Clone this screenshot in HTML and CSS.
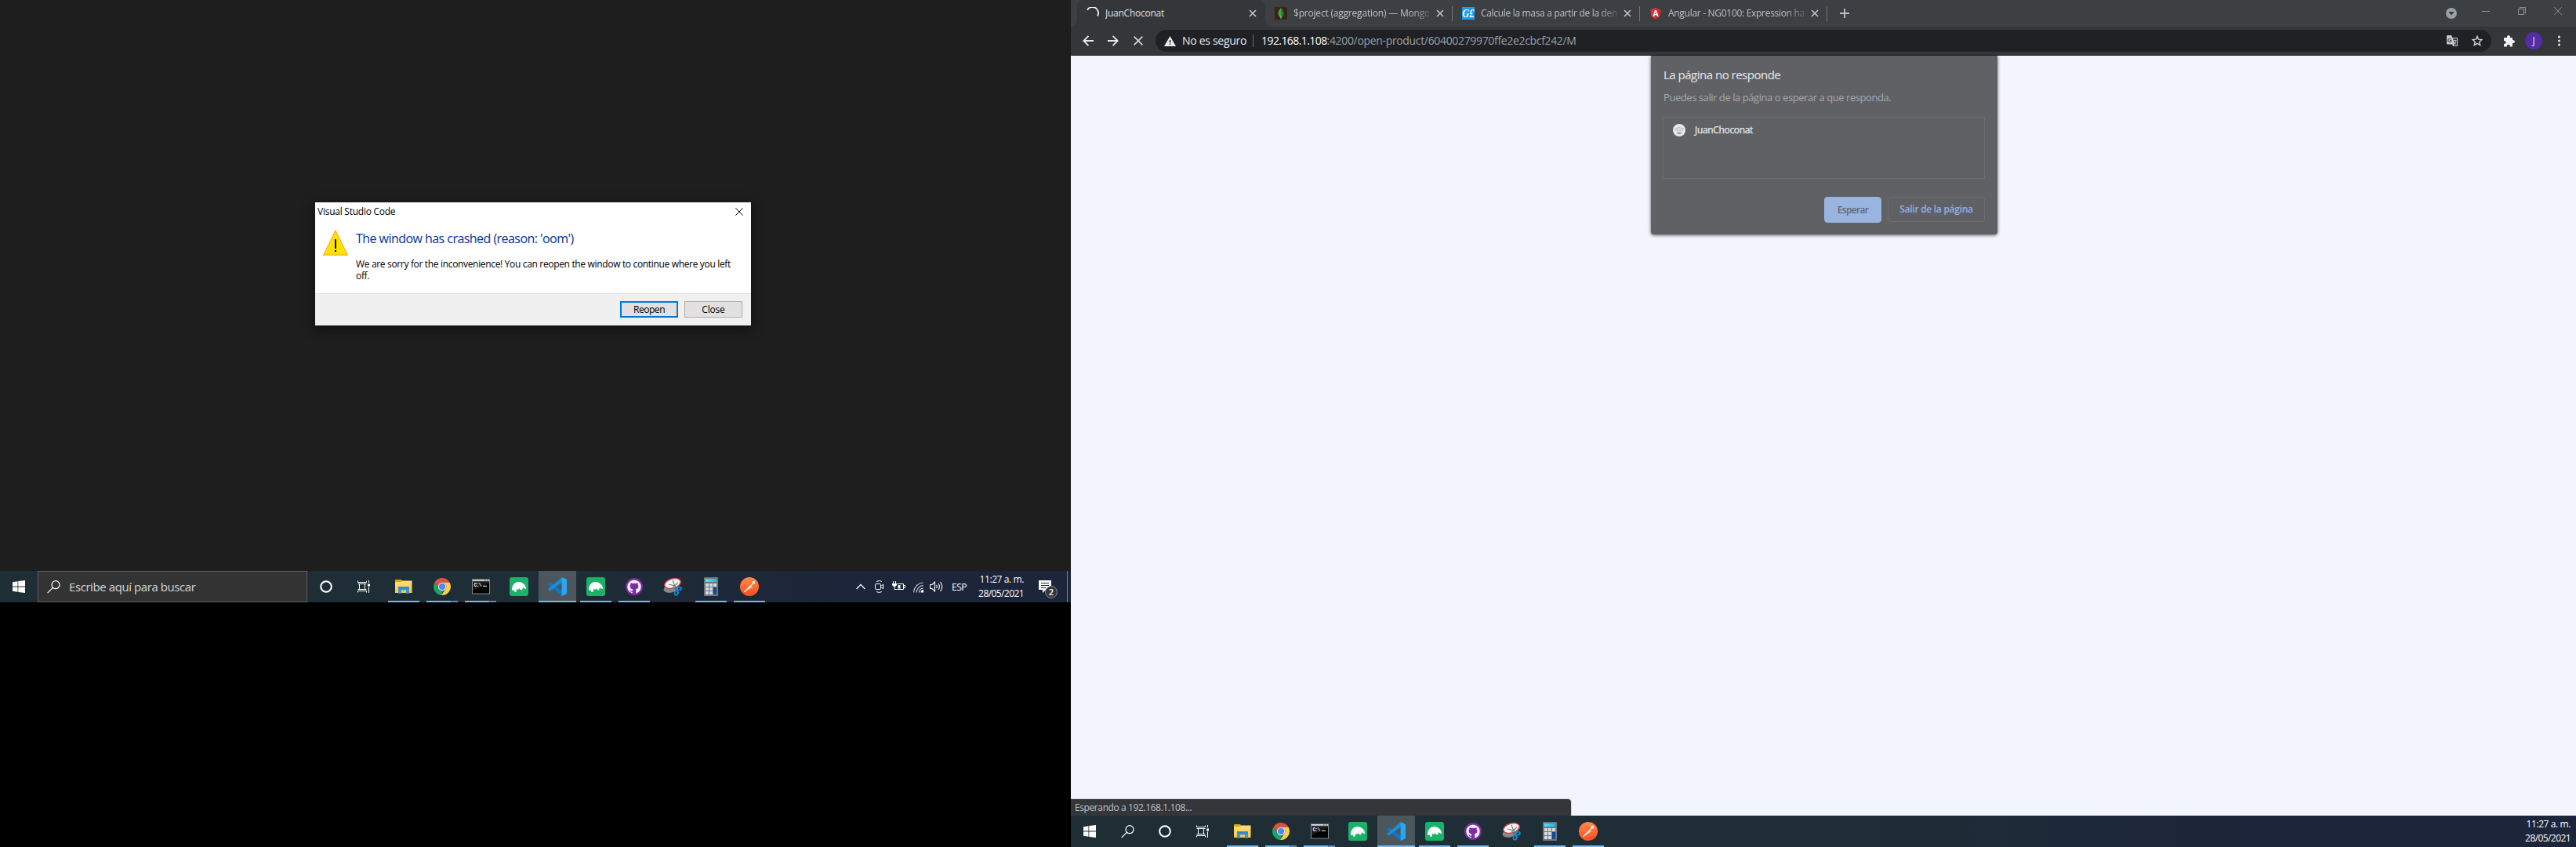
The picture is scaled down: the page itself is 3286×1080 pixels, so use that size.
FILE: index.html
```html
<!DOCTYPE html>
<html lang="es">
<head>
<meta charset="utf-8">
<title>JuanChoconat</title>
<link rel="stylesheet" href="styles.css">
</head>
<body>
<svg class="defs" width="0" height="0" aria-hidden="true">
  <defs>
    <linearGradient id="gPost" x1="0" y1="0" x2="0" y2="1"><stop offset="0" stop-color="#ff8a45"/><stop offset="1" stop-color="#ff4f25"/></linearGradient>
    <linearGradient id="gFold" x1="0" y1="0" x2="0" y2="1"><stop offset="0" stop-color="#ffe07a"/><stop offset="1" stop-color="#f9c63f"/></linearGradient>
    <linearGradient id="gCalc" x1="0" y1="0" x2="1" y2="0"><stop offset="0" stop-color="#55e3fb"/><stop offset="1" stop-color="#22b4e6"/></linearGradient>
  </defs>
  <symbol id="i-win" viewBox="0 0 16 16"><path fill="#fff" d="M0 2.2 6.5 1.2V7.6H0zM7.3 1.1 16 0V7.6H7.3zM0 8.4H6.5V14.8L0 13.8zM7.3 8.4H16V16L7.3 14.9z"/></symbol>
  <symbol id="i-search" viewBox="0 0 17 17"><g fill="none" stroke="#fff" stroke-width="1.2"><circle cx="11" cy="5.7" r="5"/><path d="M7.4 9.4.6 16.2"/></g></symbol>
  <symbol id="i-cortana" viewBox="0 0 16 16"><circle cx="8" cy="8" r="6.8" fill="none" stroke="#fff" stroke-width="2"/></symbol>
  <symbol id="i-task" viewBox="0 0 17 16"><g fill="none" stroke="#fff" stroke-width="1"><path d="M.5.5v2h11v-2M2.500 4.500v7h7v-7zM.5 15.500v-2h11v2M.5 4.500h11M.5 11.500h11M14.500 0v3M14.500 8.500V16"/></g><path fill="#fff" d="M13 4.500h3v3h-3z"/></symbol>
  <symbol id="i-folder" viewBox="0 0 24 24"><path fill="#e3a200" d="M1 3h8l1.500 2v3H1z"/><path fill="url(#gFold)" d="M1 6h8l1.200-1.500H22.500V20H1z"/><path fill="#3a94dc" d="M5 20.700v-8.200q0-.5.500-.5h13q.5 0 .5.500v8.200h-4V16.500H9v4.200z"/><path fill="#2577c2" d="M5 15v-2.500h14V15z" opacity=".45"/></symbol>
  <symbol id="i-chrome" viewBox="0 0 24 24"><path fill="#dd5144" d="M12 1A11 11 0 0 1 21.600 6.800H12A5.200 5.200 0 0 0 7.400 14.500L2.500 6.500A11 11 0 0 1 12 1z"/><path fill="#1da462" d="M2.500 6.500 7.500 14.600A5.200 5.200 0 0 0 13.500 17L11 23A11 11 0 0 1 2.500 6.500z"/><path fill="#ffcd46" d="M21.600 6.800A11 11 0 0 1 11 23L16.600 14.600A5.200 5.200 0 0 0 12 6.800z"/><circle cx="12" cy="12" r="5.200" fill="#f1f1f1"/><circle cx="12" cy="12" r="4.200" fill="#4c8bf5"/></symbol>
  <symbol id="i-cmd" viewBox="0 0 24 24"><path fill="#868a8c" d="M1 2.500h23v19H1z"/><path fill="#dfe3e4" d="M2 3h15v1.600H2zM18.500 3h1.500v1.600h-1.500zM21.500 3H23v1.600h-1.500z"/><path fill="#000" d="M2 5.500h21v15H2z"/><path fill="#333" d="M2 5.500h21v2L2 17z" opacity=".5"/><text x="3.500" y="11.500" font-family="Liberation Mono,monospace" font-size="6.500" font-weight="700" textLength="10" fill="#fff">C:\</text><path fill="#fff" d="M15 10.800h5v1h-5z"/></symbol>
  <symbol id="i-robo" viewBox="0 0 24 24"><rect width="24" height="24" rx="3" fill="#1bb168"/><path fill="#fff" d="M3 16C2.800 13 4.200 9.500 6.800 7.600 9.500 5.700 13.500 5.600 16 7.200c3 1.200 5 4 5 7.600-1.600.6-2.600-.8-3.600-1.800-1 .8-.8 2-1.200 3.200h-2.400l-1-2.600-.8 2-1.800.1-.5-1.700c-.9 1.600-.6 3.200-1.200 4.800H6.300L6 16.600C5 17.300 3.600 17 3 16z"/></symbol>
  <symbol id="i-code" viewBox="0 0 24 24"><path fill="#0c78c4" d="M0 9 2.500 6.800 18 17.600V24z"/><path fill="#1a8cd8" d="M0 15.200 2.500 17.400 18 6.400V0z"/><path fill="#2aa5f2" d="M17.600 0 24 3V21L17.600 24z"/></symbol>
  <symbol id="i-git" viewBox="0 0 24 24"><circle cx="12" cy="12" r="11" fill="#7d2da8"/><circle cx="12" cy="12.200" r="8.700" fill="#f4f0f6"/><path fill="#7d2da8" d="M7.600 7.200c1 .1 1.700.4 2.300.8q2.100-.5 4.200 0c.6-.4 1.300-.7 2.300-.8.4.9.300 1.500.1 2 .6.600.9 1.300.9 2.200 0 2.500-1.500 3.500-3.600 3.800.4.400.5.900.5 1.600v4.300H9.700v-2.300c-1.700.3-2.300-.5-2.700-1.300l-.9-1c1.100-.2 1.500.4 2 1 .4.500 1 .5 1.600.3.100-.9.200-1.200.5-2.600-2.100-.3-3.600-1.300-3.600-3.800 0-.9.300-1.600.9-2.200-.2-.5-.3-1.100.1-2z"/></symbol>
  <symbol id="i-snip" viewBox="0 0 24 24"><ellipse cx="10" cy="14.500" rx="9.500" ry="5" fill="#85898d" transform="rotate(-10 10 14.500)"/><ellipse cx="12" cy="8" rx="10.500" ry="6" fill="#f6f6f6" stroke="#d8443f" stroke-width="1.500" transform="rotate(-16 12 8)"/><path d="m12 4 4.500 11M19 7l-7 6M7 9l8 2" stroke="#70777c" stroke-width="1.100" fill="none"/><g fill="none" stroke="#1687c8" stroke-width="1.800"><ellipse cx="20" cy="14.500" rx="3" ry="2"/><ellipse cx="16.500" cy="20" rx="2" ry="2.900"/><path d="m14.500 13.500 5.500 7"/></g></symbol>
  <symbol id="i-calc" viewBox="0 0 24 24"><rect x="3" y="0" width="18" height="24" rx="1" fill="#6f777d"/><path fill="url(#gCalc)" d="M5 2h14v4H5z"/><path fill="#d5dade" d="M5 8h4v4H5zM10 8h4v4h-4zM15 8h4v4h-4zM5 13h4v4H5zM10 13h4v4h-4zM5 18h4v4H5zM10 18h4v4h-4z"/><path fill="#0b4c94" d="M15 13h4v9h-4z"/></symbol>
  <symbol id="i-post" viewBox="0 0 24 24"><circle cx="12" cy="12" r="12" fill="url(#gPost)"/><path d="m5.500 18.500 7-7.500 3.500 1-7 4.500z" fill="#ffe6da"/><path d="M5.500 18.800 17 7.300" stroke="#fff" stroke-width="1.200"/><circle cx="17.300" cy="6.700" r="1.900" fill="#fff"/></symbol>
  <symbol id="i-x" viewBox="0 0 10 10"><path d="m1 1 8 8M9 1 1 9" fill="none" stroke="currentColor" stroke-width="1.700"/></symbol>
  <symbol id="i-thinx" viewBox="0 0 10 10"><path d="m.3.3 9.400 9.400M9.700.3.3 9.700" fill="none" stroke="currentColor" stroke-width="1"/></symbol>
</svg>

<main class="desktop">
  <section class="monitor monitor-left">
    <div class="wall">
      <div class="dialog">
        <header class="dlg-bar"><span class="t dlg-title">Visual Studio Code</span><svg class="dlg-x" width="10" height="10"><use href="#i-thinx"/></svg></header>
        <div class="dlg-body">
          <svg class="warn" width="32" height="33" viewBox="0 0 32 33"><path d="M16 .8 31.300 32.200H.7z" fill="#ffe100" stroke="#fcb71c" stroke-width="1.200"/><path fill="#000" d="M15 12h2v12h-2zM15 26h2v2h-2z"/></svg>
          <div class="dlg-copy">
            <h1><span class="t dlg-h">The window has crashed (reason: 'oom')</span></h1>
            <p><span class="t dlg-p">We are sorry for the inconvenience! You can reopen the window to continue where you left</span><br>off.</p>
          </div>
        </div>
        <footer class="dlg-foot"><button class="wbtn primary"><span class="t b-re">Reopen</span></button><button class="wbtn"><span class="t b-cl">Close</span></button></footer>
      </div>
    </div>
    <nav class="taskbar">
      <span class="slot"><svg width="16" height="16"><use href="#i-win"/></svg></span>
      <div class="searchbox"><svg width="17" height="17"><use href="#i-search"/></svg><span class="t ph">Escribe aquí para buscar</span></div>
      <span class="slot"><svg width="16" height="16"><use href="#i-cortana"/></svg></span>
      <span class="slot"><svg width="17" height="16"><use href="#i-task"/></svg></span>
      <div class="apps">
        <span class="app open"><svg width="24" height="24"><use href="#i-folder"/></svg></span>
        <span class="app open multi"><svg width="24" height="24"><use href="#i-chrome"/></svg></span>
        <span class="app open multi"><svg width="24" height="24"><use href="#i-cmd"/></svg></span>
        <span class="app"><svg width="24" height="24"><use href="#i-robo"/></svg></span>
        <span class="app open active"><svg width="24" height="24"><use href="#i-code"/></svg></span>
        <span class="app open"><svg width="24" height="24"><use href="#i-robo"/></svg></span>
        <span class="app open"><svg width="24" height="24"><use href="#i-git"/></svg></span>
        <span class="app"><svg width="24" height="24"><use href="#i-snip"/></svg></span>
        <span class="app open"><svg width="24" height="24"><use href="#i-calc"/></svg></span>
        <span class="app open"><svg width="24" height="24"><use href="#i-post"/></svg></span>
      </div>
      <div class="tray">
        <svg width="12" height="8" viewBox="0 0 12 8"><path d="m.6 7 5.400-5.600L11.400 7" fill="none" stroke="#fff" stroke-width="1.300"/></svg>
        <svg class="cam" width="12" height="16" viewBox="0 0 12 16"><g fill="none" stroke="#fff"><rect x=".5" y="4.500" width="7" height="7" rx="1"/><path d="M8 7.500 10.500 5v6L8 8.500M2 1.500Q5.500-.5 9 1.500M2 14.500q3.500 2 7 0"/></g></svg>
        <svg class="bat" width="17" height="14" viewBox="0 0 17 14"><path d="M6.500 3.500h8v7h-8M15 5.500h1.500v3H15M1.500 0v3M4.500 0v3M3 6v4.500h3" fill="none" stroke="#fff"/><path fill="#fff" d="M0 3h6v2L4 7H2L0 5zM7.500 5h3v4.500h-3z"/></svg>
        <svg class="wifi" width="14" height="14" viewBox="0 0 14 14"><path d="M.7 13.500A12.700 12.700 0 0 1 12.500 1M4 13.500a9.300 9.300 0 0 1 8.700-9M7.300 13.500a6 6 0 0 1 5.500-5.500" fill="none" stroke="#d5dade" stroke-width="1.100"/><path fill="#fff" d="M9.500 13.500a3.500 3.500 0 0 1 3.500-3.500v3.500z"/></svg>
        <svg class="vol" width="17" height="14" viewBox="0 0 17 14"><path d="M.5 4.500h2.500L6.500 1v12L3 9.500H.5zM8.500 5q1.500 2 0 4M11 3q3 4 0 8M13.500 1q4.500 6 0 12" fill="none" stroke="#fff" stroke-width="1.100"/></svg>
        <span class="t esp">ESP</span>
        <div class="clock"><span class="t tm">11:27 a. m.</span><span class="t dt">28/05/2021</span></div>
        <span class="notif"><svg width="16" height="16" viewBox="0 0 16 16"><path fill="#fff" d="M0 0h16v12H9l-4 4v-4H0z"/><path d="M3 3.500h10M3 6.500h10M3 9.500h6" stroke="#1c2538"/></svg><b>2</b></span>
        <i class="peek"></i>
      </div>
    </nav>
  </section>

  <section class="monitor monitor-right">
    <div class="tabs">
      <div class="tab active"><svg class="fav" width="16" height="16" viewBox="0 0 16 16"><path d="M1 3.700A7 7 0 0 1 14 11.500" fill="none" stroke="#f1f3f4" stroke-width="1.800"/></svg><span class="label"><span class="t tb1">JuanChoconat</span></span><svg width="10" height="10"><use href="#i-x"/></svg></div>
      <div class="tab"><svg class="fav" width="16" height="16" viewBox="0 0 16 16"><path fill="#3a2418" d="M0 0h16v16H0z"/><path fill="#42a846" d="M8 1Q4.500 5 4.500 8q0 3.500 3.500 6z"/><path fill="#2b7f38" d="M8 1q3.500 4 3.500 7 0 3.500-3.500 6z"/><path stroke="#b7d7a8" stroke-width=".7" d="M8 11v4"/></svg><span class="label"><span class="t tb2">$project (aggregation) — Mongo</span></span><svg width="10" height="10"><use href="#i-x"/></svg></div>
      <div class="tab"><svg class="fav" width="16" height="16" viewBox="0 0 16 16"><path fill="#1d9bf0" d="M0 0h16v16H0z"/><text x=".3" y="12.500" textLength="15" lengthAdjust="spacingAndGlyphs" font-family="Liberation Serif,serif" font-style="italic" font-weight="700" font-size="14" fill="#fff">G£</text></svg><span class="label"><span class="t tb3">Calcule la masa a partir de la den</span></span><svg width="10" height="10"><use href="#i-x"/></svg></div>
      <div class="tab"><svg class="fav" width="16" height="16" viewBox="0 0 16 16"><path fill="#dd3135" d="M8 .8 14.700 3.200 13.600 12 8 15.200 2.400 12 1.300 3.200z"/><path fill="#b52e31" d="M8 .8 14.700 3.200 13.600 12 8 15.200z" opacity=".7"/><text x="8" y="11.700" text-anchor="middle" font-family="Liberation Sans,sans-serif" font-weight="700" font-size="10.500" fill="#fff">A</text></svg><span class="label"><span class="t tb4">Angular - NG0100: Expression ha</span></span><svg width="10" height="10"><use href="#i-x"/></svg></div>
      <svg class="plus" width="12" height="12" viewBox="0 0 12 12"><path d="M6 0v12M0 6h12" stroke="#bdc1c6" stroke-width="1.800"/></svg>
      <div class="winctl">
        <svg width="14" height="14" viewBox="0 0 14 14"><circle cx="7" cy="7" r="7" fill="#9aa0a6"/><path fill="#35363a" d="M3.500 5h7L7 9.500z"/></svg>
        <svg width="10" height="10" viewBox="0 0 10 10"><path d="M0 5.500h10" stroke="#8d9194"/></svg>
        <svg width="10" height="10" viewBox="0 0 10 10"><path d="M.5 2.500h7v7h-7zM2.500 2.500v-2h7v7h-2" fill="none" stroke="#8d9194"/></svg>
        <svg width="10" height="10"><use href="#i-thinx"/></svg>
      </div>
    </div>
    <div class="toolbar">
      <svg width="14" height="14" viewBox="0 0 14 14"><path d="M14 7H1.500M7.500.8 1.300 7l6.200 6.200" fill="none" stroke="#e8eaed" stroke-width="1.800"/></svg>
      <svg width="14" height="14" viewBox="0 0 14 14"><path d="M0 7h12.500M6.500.8 12.700 7l-6.200 6.200" fill="none" stroke="#e8eaed" stroke-width="1.800"/></svg>
      <svg width="12" height="12" viewBox="0 0 12 12"><path d="m.6.600 10.800 10.800M11.400.6.600 11.400" fill="none" stroke="#d3d6da" stroke-width="1.600"/></svg>
      <div class="omni">
        <svg width="15" height="13" viewBox="0 0 15 13"><path fill="#e8eaed" d="M7.500 0 15 13H0z"/><path fill="#202124" d="M6.800 5h1.500v3.500H6.800zM6.800 9.500h1.500V11H6.800z"/></svg>
        <span class="t sec">No es seguro</span><i class="bar"></i>
        <span class="t host">192.168.1.108</span><span class="t path">:4200/open-product/60400279970ffe2e2cbcf242/M</span>
        <svg class="trans" width="14" height="14" viewBox="0 0 14 14"><path fill="#c6c9cc" d="M1 0h5l1.500 3H13q1 0 1 1v9q0 1-1 1H8l-1-2.500H1q-1 0-1-1V1q0-1 1-1z"/><path fill="#35363a" d="M8 4h5v9H8.800l1.300-1.700z"/><text x="0.800" y="8.500" font-family="Liberation Sans,sans-serif" font-weight="700" font-size="7.500" fill="#35363a">G</text><path d="M8.500 6.500h4M9 8l3 3.500M12 7q-.5 2.500-3 4.500" fill="none" stroke="#c6c9cc" stroke-width=".9"/></svg>
        <svg width="14" height="14" viewBox="0 0 14 14"><path d="m7 1.300 1.600 3.900 4.300.4-3.200 2.800 1 4.200L7 10.400l-3.700 2.200 1-4.200L1.100 5.600l4.300-.4z" fill="none" stroke="#d0d3d6" stroke-width="1.400"/></svg>
      </div>
      <svg class="ext" width="15" height="15" viewBox="0 0 15 15"><path fill="#f1f3f4" d="M1 3.800Q1 3 1.800 3H5q0-3 2-3t2 3h2.200q.8 0 .8.800V6q2.900 0 2.900 2T12 10v3.700q0 .8-.8.800H8.800q0-2.800-2-2.800t-2 2.800h-3q-.8 0-.8-.8V11q2.700-.2 2.700-2T1 7z"/></svg>
      <span class="avatar">J</span>
      <svg class="dots" width="3" height="14" viewBox="0 0 3 14"><g fill="#e8eaed"><circle cx="1.500" cy="2" r="1.500"/><circle cx="1.500" cy="7" r="1.500"/><circle cx="1.500" cy="12" r="1.500"/></g></svg>
    </div>
    <div class="page">
      <div class="hang">
        <h2><span class="t hg1">La página no responde</span></h2>
        <p><span class="t hg2">Puedes salir de la página o esperar a que responda.</span></p>
        <div class="hang-list"><svg width="16" height="16" viewBox="0 0 16 16"><circle cx="8" cy="8" r="8" fill="#e8e8e8"/><path d="M2.500 6.500Q8 3 13.500 6.500M3 8h10" stroke="#b0b0b0" stroke-width="1.200" fill="none"/><path fill="#909090" d="M4.500 10.800h7Q10.500 13 8 13t-3.500-2.200z"/></svg><span class="t hg3">JuanChoconat</span></div>
        <div class="hang-btns"><button class="cbtn fill"><span class="t hg4">Esperar</span></button><button class="cbtn"><span class="t hg5">Salir de la página</span></button></div>
      </div>
      <div class="status"><span class="t st">Esperando a 192.168.1.108...</span></div>
    </div>
    <nav class="taskbar">
      <span class="slot"><svg width="16" height="16"><use href="#i-win"/></svg></span>
      <span class="slot"><svg width="17" height="17"><use href="#i-search"/></svg></span>
      <span class="slot"><svg width="16" height="16"><use href="#i-cortana"/></svg></span>
      <span class="slot"><svg width="17" height="16"><use href="#i-task"/></svg></span>
      <div class="apps">
        <span class="app open"><svg width="24" height="24"><use href="#i-folder"/></svg></span>
        <span class="app open multi"><svg width="24" height="24"><use href="#i-chrome"/></svg></span>
        <span class="app open multi"><svg width="24" height="24"><use href="#i-cmd"/></svg></span>
        <span class="app"><svg width="24" height="24"><use href="#i-robo"/></svg></span>
        <span class="app open active"><svg width="24" height="24"><use href="#i-code"/></svg></span>
        <span class="app open"><svg width="24" height="24"><use href="#i-robo"/></svg></span>
        <span class="app open"><svg width="24" height="24"><use href="#i-git"/></svg></span>
        <span class="app"><svg width="24" height="24"><use href="#i-snip"/></svg></span>
        <span class="app open"><svg width="24" height="24"><use href="#i-calc"/></svg></span>
        <span class="app open"><svg width="24" height="24"><use href="#i-post"/></svg></span>
      </div>
      <div class="tray end"><div class="clock"><span class="t tm">11:27 a. m.</span><span class="t dt">28/05/2021</span></div></div>
    </nav>
  </section>
</main>
</body>
</html>
```
FILE: styles.css
```css
* { box-sizing: border-box; margin: 0; padding: 0; }
body { background: #000; font-family: "Open Sans", "Noto Sans", sans-serif; font-size: 12px; color: #000; }
svg { display: block; flex: none; }
.defs { position: absolute; }
.t { white-space: pre; }
button { font: inherit; }

.desktop { display: grid; grid-template-columns: 1366px 1920px; width: 3286px; height: 1080px; overflow: hidden; }
.monitor { display: flex; flex-direction: column; overflow: hidden; }
.monitor-left { height: 768px; }
.monitor-right { height: 1080px; }
.wall { flex: 1; background: #1e1e1e; padding: 258px 0 0 402px; }

/* Crash dialog */
.dialog { width: 556px; height: 157px; background: #fff; display: flex; flex-direction: column; box-shadow: 0 3px 14px 2px rgba(0,0,0,.45); }
.dlg-bar { display: flex; justify-content: space-between; align-items: flex-start; height: 30px; padding: 7px 10px 0 3px; }
.dlg-title { line-height: 10px; letter-spacing: -.25px; }
.dlg-body { flex: 1; display: flex; padding: 5px 10px 0; gap: 10px; }
.dlg-copy { flex: 1; }
.dlg-copy h1 { font-size: 16px; font-weight: 400; color: #003399; line-height: 22px; height: 22px; letter-spacing: -.545px; }
.dlg-copy p { margin-top: 14px; line-height: 15px; white-space: nowrap; letter-spacing: -.334px; }
.dlg-foot { height: 41px; background: #f0f0f0; border-top: 1px solid #dfdfdf; display: flex; justify-content: flex-end; gap: 8px; padding: 9px 11px 0 0; }
.wbtn { width: 74px; height: 21px; background: #e1e1e1; border: 1px solid #adadad; line-height: 17px; letter-spacing: -.2px; }
.wbtn.primary { border: 2px solid #0078d7; line-height: 15px; letter-spacing: -.45px; }

/* Taskbar */
.taskbar { height: 40px; flex: none; display: flex; background: linear-gradient(90deg, #1f2e35 0%, #1f2e36 50%, #1c2539 78%, #1c2539 100%); color: #fff; }
.slot { width: 48px; display: grid; place-items: center; }
.searchbox { width: 344px; border: 1px solid #5d5d5d; background: #333; display: flex; align-items: center; gap: 11px; padding-left: 11px; font-size: 15px; letter-spacing: -.42px; color: #d6d6d6; }
.apps { display: flex; gap: 1px; margin-left: 3px; }
.app { width: 48px; display: flex; flex-direction: column; align-items: center; padding-top: 8px; }
.app.open::after { content: ""; width: 40px; height: 2px; margin-top: 6px; background: #76b9ed; }
.app.multi::after { background: linear-gradient(90deg, #76b9ed 31px, #3f6f94 31px, #5a8fb9 33px); }
.app.active { background: #4c565d; }
.app.active::after { width: 48px; }
.tray { margin-left: auto; display: flex; align-items: center; }
.tray .cam { margin-left: 12px; }
.tray .bat { margin-left: 10px; }
.tray .wifi { margin-left: 10px; margin-top: 2px; }
.tray .vol { margin-left: 7px; }
.esp { width: 20px; margin-left: 11px; letter-spacing: -.45px; }
.clock { display: flex; flex-direction: column; align-items: flex-end; width: 58px; margin-left: 14px; line-height: 18px; }
.tm { letter-spacing: -.4px; }
.dt { letter-spacing: -.58px; }
.notif { position: relative; margin-left: 19px; width: 25px; height: 16px; }
.notif b { position: absolute; left: 8px; top: 7px; width: 16px; height: 16px; border-radius: 50%; background: #33383d; border: 1px solid #85898d; font-size: 11px; line-height: 14px; text-align: center; font-weight: 600; }
.peek { width: 1px; height: 40px; background: #7b828c; margin: 0 4px 0 11px; }
.tray.end { padding-right: 7px; }

/* Browser */
.tabs { height: 34px; flex: none; background: #3c4043; display: flex; padding-left: 8px; }
.tab { width: 239px; height: 34px; display: flex; align-items: center; padding: 0 11px 0 12px; color: #bdc1c6; position: relative; }
.tab .label { width: 175px; margin: 0 9px 0 8px; overflow: hidden; line-height: 18px; -webkit-mask-image: linear-gradient(90deg, #000 150px, transparent 182px); mask-image: linear-gradient(90deg, #000 150px, transparent 182px); }
.tab:not(.active)::after { content: ""; position: absolute; right: 0; top: 8px; width: 1px; height: 19px; background: #73777a; }
.tab.active { width: 240px; background: #35363a; border-radius: 8px 8px 0 0; }
.tab.active::before, .tab.active::after { content: ""; position: absolute; bottom: 0; width: 8px; height: 8px; }
.tab.active::before { left: -8px; background: radial-gradient(circle at 0 0, transparent 7.5px, #35363a 8px); }
.tab.active::after { right: -8px; background: radial-gradient(circle at 100% 0, transparent 7.5px, #35363a 8px); }
.tab.active .label { color: #dfe1e5; -webkit-mask-image: none; mask-image: none; }
.tb1 { letter-spacing: -.25px; }
.tb2 { letter-spacing: -.2px; }
.tb3 { letter-spacing: -.318px; }
.tb4 { letter-spacing: -.294px; }
.plus { margin: 11px 0 0 16px; }
.winctl { margin-left: auto; display: flex; padding: 9px 18px 0 0; gap: 36px; color: #8d9194; }
.winctl svg:first-child { margin: 1px -4px 0 0; }
.toolbar { height: 37px; flex: none; background: #35363a; border-bottom: 1px solid #232327; display: flex; align-items: center; padding-left: 15px; gap: 18px; }
.toolbar > svg:nth-child(3) { margin-left: 1px; }
.omni { width: 1704px; height: 28px; border-radius: 14px; margin-left: -2px; background: #202124; display: flex; align-items: center; padding: 0 11px; font-size: 14px; color: #e8eaed; line-height: 20px; }
.sec { margin-left: 8px; letter-spacing: -.3px; }
.bar { width: 1px; height: 16px; background: #6b6e72; margin: 0 10px 0 8px; }
.host { color: #fff; letter-spacing: -.58px; }
.path { color: #9aa0a6; letter-spacing: -.336px; }
.trans { margin: 0 18px 0 auto; }
.ext { margin-left: -3px; }
.avatar { width: 22px; height: 22px; border-radius: 50%; background: #512da8; color: #e8eaed; text-align: center; line-height: 22px; margin-left: -5px; }
.dots { margin-left: 2px; }
.page { flex: 1; background: #f2f5fd; display: flex; flex-direction: column; justify-content: space-between; }
.hang { width: 442px; height: 228px; margin-left: 740px; background: #606164; border-radius: 0 0 4px 4px; box-shadow: 0 1px 4px rgba(0,0,0,.6); padding: 15px 16px; color: #e8eaed; }
.hang h2 { font-size: 15px; font-weight: 400; line-height: 19px; height: 20px; letter-spacing: -.5px; }
.hang p { font-size: 13px; color: #a3a8ad; line-height: 20px; height: 20px; margin-top: 8px; letter-spacing: -.44px; }
.hang-list { margin: 15px -1px 0; height: 79px; width: 411px; border: 1px solid #6b6d70; padding: 8px 12px; display: flex; gap: 12px; line-height: 16px; letter-spacing: -.33px; }
.hg3 { -webkit-text-stroke: .25px #e8eaed; }
.hang-btns { display: flex; justify-content: flex-end; gap: 8px; margin: 23px 0 0 0; }
.cbtn { height: 32px; width: 124px; border: 1px solid #6b6e72; border-radius: 4px; background: none; color: #8fb1ee; font-weight: 600; line-height: 30px; letter-spacing: -.28px; }
.cbtn.fill { width: 73px; height: 33px; background: #9ab4e0; border-color: #9ab4e0; color: #5f6775; letter-spacing: -.65px; }
.status { width: 638px; height: 21px; background: #35363a; border-radius: 0 4px 0 0; color: #bdc1c6; line-height: 21px; padding-left: 5px; letter-spacing: -.4px; box-shadow: 0 0 1px 1px #d5d7dc; }
```
